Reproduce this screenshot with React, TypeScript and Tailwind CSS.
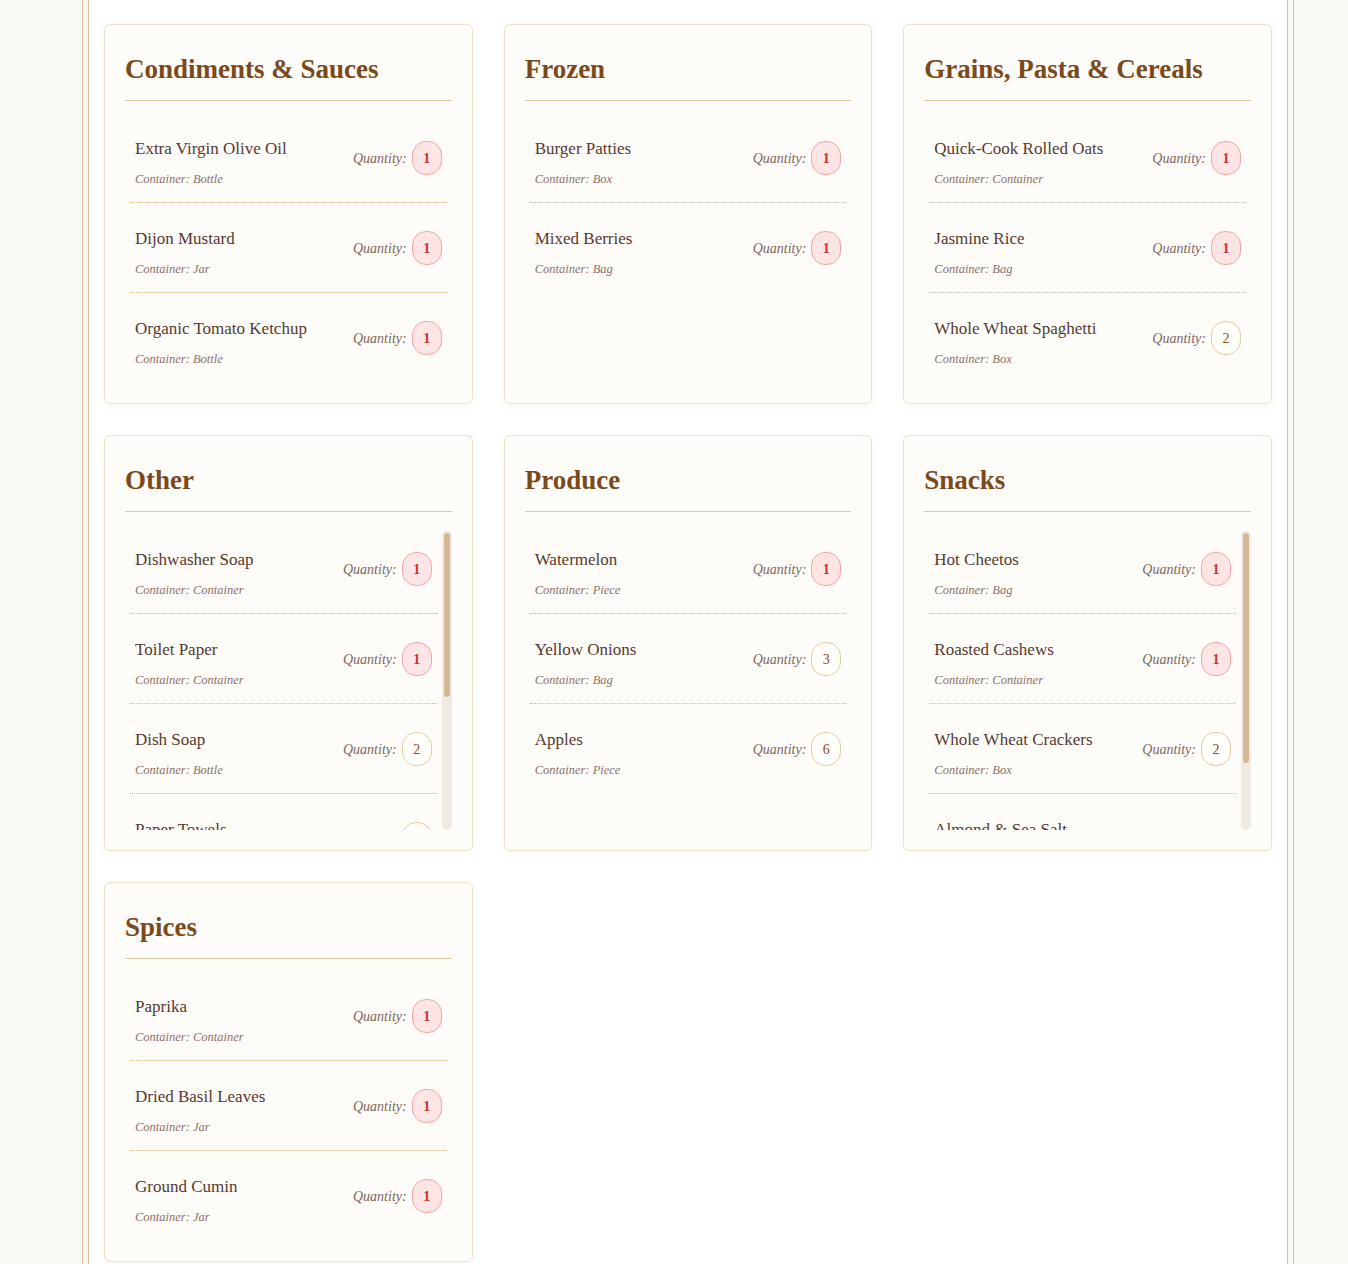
type Item = {
  name: string;
  container: string;
  quantity: number;
};

type Category = {
  title: string;
  items: Item[];
  // thumb height of the list scrollbar, only for long lists
  thumb?: number;
};

const categories: Category[] = [
  {
    title: 'Condiments & Sauces',
    items: [
      { name: 'Extra Virgin Olive Oil', container: 'Bottle', quantity: 1 },
      { name: 'Dijon Mustard', container: 'Jar', quantity: 1 },
      { name: 'Organic Tomato Ketchup', container: 'Bottle', quantity: 1 },
    ],
  },
  {
    title: 'Frozen',
    items: [
      { name: 'Burger Patties', container: 'Box', quantity: 1 },
      { name: 'Mixed Berries', container: 'Bag', quantity: 1 },
    ],
  },
  {
    title: 'Grains, Pasta & Cereals',
    items: [
      { name: 'Quick-Cook Rolled Oats', container: 'Container', quantity: 1 },
      { name: 'Jasmine Rice', container: 'Bag', quantity: 1 },
      { name: 'Whole Wheat Spaghetti', container: 'Box', quantity: 2 },
    ],
  },
  {
    title: 'Other',
    thumb: 164,
    items: [
      { name: 'Dishwasher Soap', container: 'Container', quantity: 1 },
      { name: 'Toilet Paper', container: 'Container', quantity: 1 },
      { name: 'Dish Soap', container: 'Bottle', quantity: 2 },
      { name: 'Paper Towels', container: 'Roll', quantity: 2 },
      { name: 'Trash Bags', container: 'Box', quantity: 1 },
      { name: 'Laundry Detergent', container: 'Bottle', quantity: 1 },
    ],
  },
  {
    title: 'Produce',
    items: [
      { name: 'Watermelon', container: 'Piece', quantity: 1 },
      { name: 'Yellow Onions', container: 'Bag', quantity: 3 },
      { name: 'Apples', container: 'Piece', quantity: 6 },
    ],
  },
  {
    title: 'Snacks',
    thumb: 230,
    items: [
      { name: 'Hot Cheetos', container: 'Bag', quantity: 1 },
      { name: 'Roasted Cashews', container: 'Container', quantity: 1 },
      { name: 'Whole Wheat Crackers', container: 'Box', quantity: 2 },
      { name: 'Almond & Sea Salt Chocolate Bars', container: 'Box', quantity: 1 },
    ],
  },
  {
    title: 'Spices',
    items: [
      { name: 'Paprika', container: 'Container', quantity: 1 },
      { name: 'Dried Basil Leaves', container: 'Jar', quantity: 1 },
      { name: 'Ground Cumin', container: 'Jar', quantity: 1 },
    ],
  },
];

function QuantityBadge({ quantity }: { quantity: number }) {
  const low = quantity <= 1;
  return (
    <span
      className={
        low
          ? 'flex h-[34px] w-[30px] items-center justify-center rounded-[14px] border border-[#f1a5a5] bg-[#fde5e5] text-[14px] font-bold text-[#c4372d]'
          : 'flex h-[34px] w-[30px] items-center justify-center rounded-[14px] border border-[#e4cca4] bg-[#fffdf9] text-[14px] text-[#8b4a1c]'
      }
    >
      {quantity}
    </span>
  );
}

function ItemRow({ item }: { item: Item }) {
  return (
    <li className="flex items-center justify-between gap-3 border-b border-dotted border-[#d3b791] px-[5px] pt-[24px] pb-[14px] last:border-b-0 last:pb-[15px]">
      <div className="min-w-0">
        <p className="text-[17px] leading-[24px] text-[#553a31]">{item.name}</p>
        <p className="mt-[9px] text-[12.5px] italic leading-[18px] text-[#8c7268]">
          Container: {item.container}
        </p>
      </div>
      <div className="mb-[9px] flex shrink-0 items-center gap-[5px]">
        <span className="text-[14px] italic text-[#7d675e]">Quantity:</span>
        <QuantityBadge quantity={item.quantity} />
      </div>
    </li>
  );
}

function CategoryCard({ category }: { category: Category }) {
  return (
    <section className="rounded-[6px] border border-[#efe2cb] bg-[#fefcf9] p-[20px] shadow-[0_2px_8px_rgba(120,90,40,0.05)]">
      <h2 className="border-b border-[#e2c99d] pt-[7px] pb-[14px] text-[27px] font-bold leading-[34px] text-[#7a4a1c]">
        {category.title}
      </h2>
      {category.thumb ? (
        <div className="mt-[12px] flex h-[306px]">
          <ul className="min-w-0 flex-1 overflow-hidden px-[5px]">
            {category.items.map((item) => (
              <ItemRow key={item.name} item={item} />
            ))}
          </ul>
          <div className="mt-[7px] w-[10px] shrink-0 rounded-full bg-[#efebe3] p-[2px]">
            <div className="rounded-full bg-[#d4b896]" style={{ height: category.thumb }} />
          </div>
        </div>
      ) : (
        <ul className="mt-[12px] px-[5px]">
          {category.items.map((item) => (
            <ItemRow key={item.name} item={item} />
          ))}
        </ul>
      )}
    </section>
  );
}

export default function App() {
  return (
    <div className="min-h-screen bg-[#faf8f3] font-['Liberation_Serif',serif]">
      <div className="ml-[82px] w-[1212px] border-x border-[#d8c199] bg-[#f8f7f4] px-[5px]">
        <div className="border-x border-[#d8c199] bg-white px-[15px] pt-[24px] pb-[40px]">
          <div className="grid grid-cols-3 gap-[31px]">
            {categories.map((category) => (
              <CategoryCard key={category.title} category={category} />
            ))}
          </div>
        </div>
      </div>
    </div>
  );
}
